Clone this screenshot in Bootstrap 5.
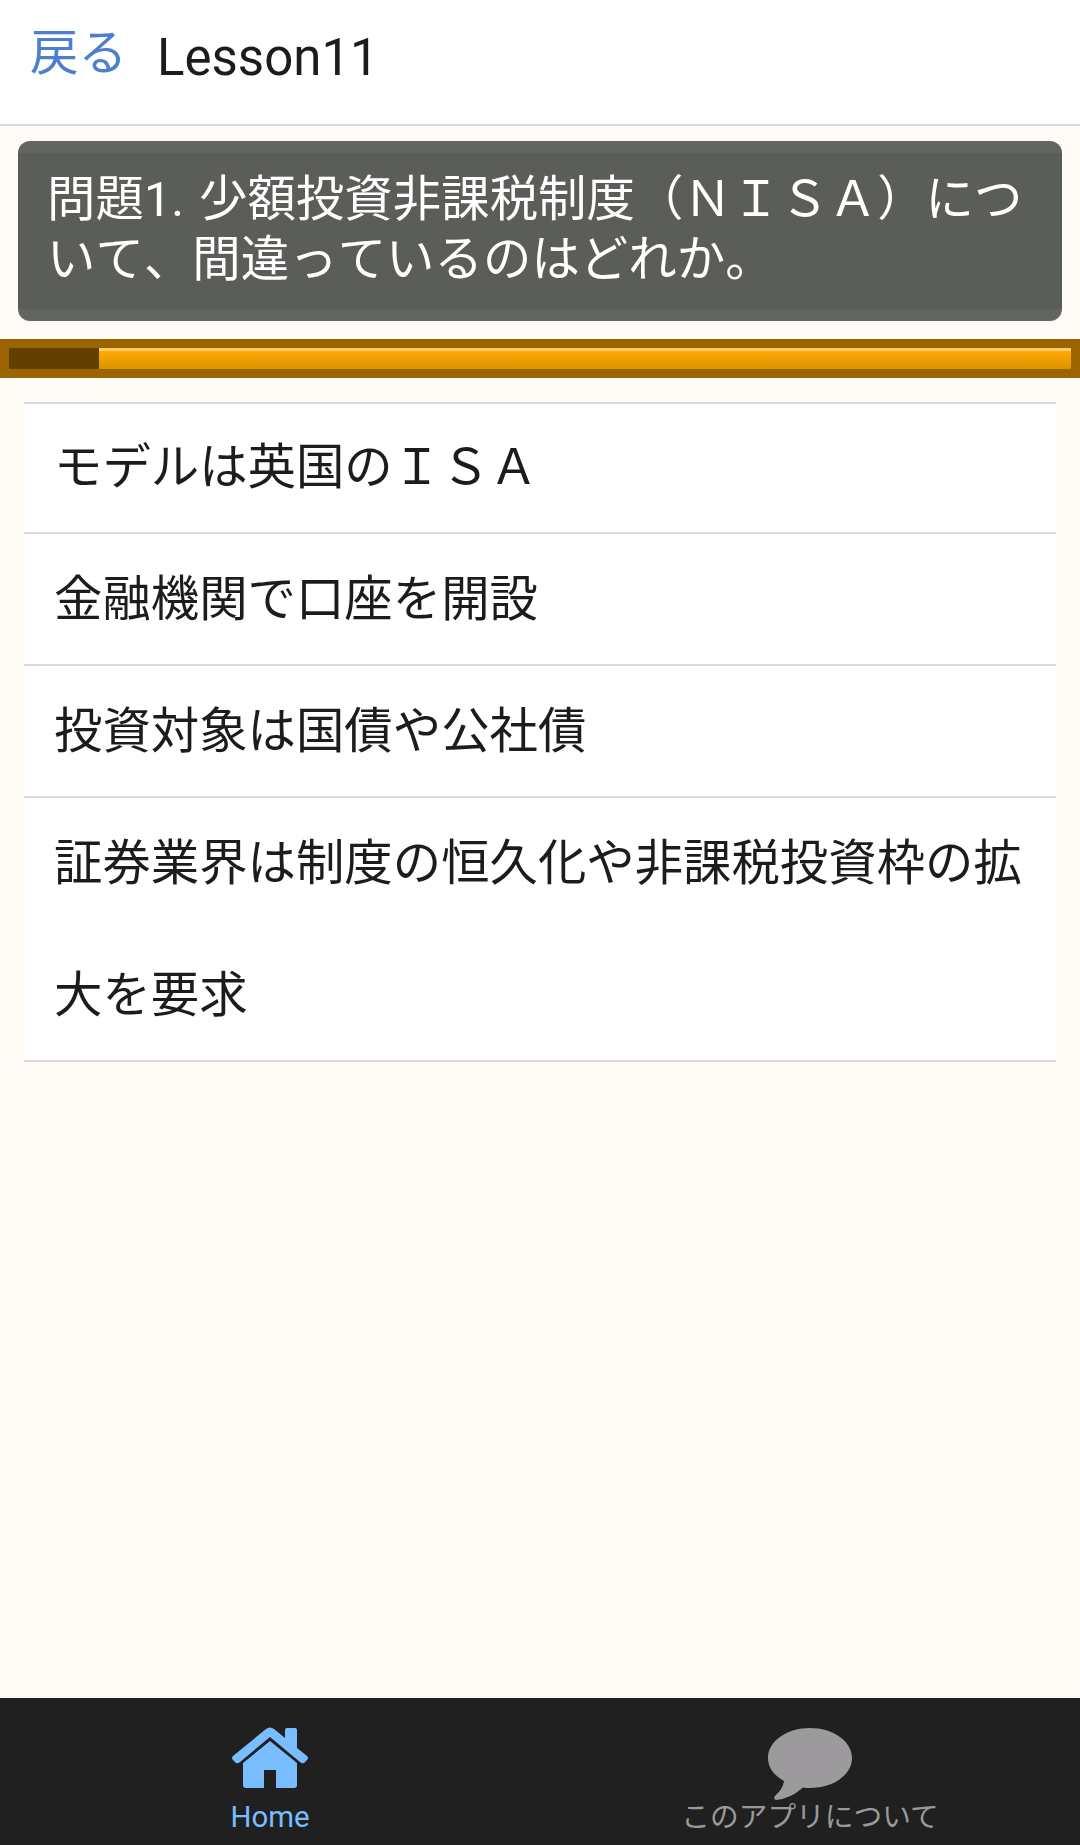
<!DOCTYPE html>
<html lang="ja">
<head>
<meta charset="utf-8">
<meta name="viewport" content="width=device-width, initial-scale=1">
<title>Lesson11</title>
<link href="https://cdn.jsdelivr.net/npm/bootstrap@5.3.0/dist/css/bootstrap.min.css" rel="stylesheet">
<style>
body{font-family:Roboto,"Noto Sans CJK JP",sans-serif;background:#fffcf7;color:#1b1c1e;font-size:48.4px;height:1845px;overflow:hidden}
.topbar{height:126px;border-bottom:2px solid #dadada;padding:0 30px}
.back-link{color:#4a80cf;font-size:48.5px;line-height:60px;padding-top:24px}
.page-title{font-size:51px;font-weight:400;line-height:60px;margin:28px 0 0 30px;color:#1b1c1e}
.question{margin:15px 18px 18px;height:180px;border-radius:12px;background:#5b5d59;border-top:12px solid #636561;border-bottom:12px solid #636561;color:#fff;padding:17px 30px 0 29px;line-height:60px;letter-spacing:.05px;word-spacing:3px;word-break:break-all;font-kerning:none}
.timer{height:39px;padding:9px;background:#9b6400}
.timer .progress{height:21px;border-radius:0;background:linear-gradient(#ffcc66 0 3px,#ffab06 3px,#dd9100)}
.timer .progress-bar{background:#624100}
.answers{margin:24px 24px 0;border-radius:0}
.answers .list-group-item{border:0;border-top:2px solid #dadada;padding:0 30px;height:132px;line-height:132px;color:#1b1c1e;background:#fff;word-break:break-all;font-kerning:none}
.answers span{display:block}
.answers .list-group-item:first-child{height:130px}
.answers .list-group-item:last-child{height:266px;border-bottom:2px solid #dadada}
.answers .list-group-item:first-child span{margin-top:-2px}
.tabbar{height:147px;background:#202020}
.tabbar a{color:#999;font-size:28.7px;line-height:34px;padding-top:29px}
.tabbar a.active{color:#78bdff;font-size:29.4px}
.tabbar svg{display:block;height:73px}
</style>
</head>
<body class="d-flex flex-column">
<header class="topbar d-flex align-items-start bg-white flex-shrink-0">
  <a href="#" class="back-link text-decoration-none">戻る</a>
  <h1 class="page-title">Lesson11</h1>
</header>
<main class="flex-grow-1">
  <div class="question">問題1. 少額投資非課税制度（ＮＩＳＡ）について、間違っているのはどれか。</div>
  <div class="timer">
    <div class="progress"><div class="progress-bar" role="progressbar" style="width:8.47%"></div></div>
  </div>
  <div class="list-group answers">
    <a href="#" class="list-group-item"><span>モデルは英国のＩＳＡ</span></a>
    <a href="#" class="list-group-item"><span>金融機関で口座を開設</span></a>
    <a href="#" class="list-group-item"><span>投資対象は国債や公社債</span></a>
    <a href="#" class="list-group-item"><span>証券業界は制度の恒久化や非課税投資枠の拡大を要求</span></a>
  </div>
</main>
<nav class="tabbar d-flex flex-shrink-0">
  <a href="#" class="active w-50 d-flex flex-column align-items-center text-decoration-none">
    <svg width="78" height="73" viewBox="0 0 78 73" fill="currentColor"><path d="M35 2Q39-1 43 2L54 11V3Q54 1 56 1H64Q66 1 66 3V21L76 29Q78 31 76 33L73 36Q71 37 69 35L39 10 9 35Q7 37 5 36L2 33Q0 31 2 29Z"/><path d="M39 14 66 36V58Q66 61 63 61H45V43H33V61H15Q12 61 12 58V36Z"/></svg>
    <span>Home</span>
  </a>
  <a href="#" class="w-50 d-flex flex-column align-items-center text-decoration-none">
    <svg width="84" height="73" viewBox="0 0 84 73" fill="#9d9a9d"><path d="M42 1C65 1 84 14 84 31S65 61 42 61Q38 61 35 60.500Q22 72 8 73Q5 72 7 69Q15 62 16 54Q0 45 0 31C0 14 19 1 42 1Z"/></svg>
    <span>このアプリについて</span>
  </a>
</nav>
<script src="https://cdn.jsdelivr.net/npm/bootstrap@5.3.0/dist/js/bootstrap.bundle.min.js"></script>
</body>
</html>
